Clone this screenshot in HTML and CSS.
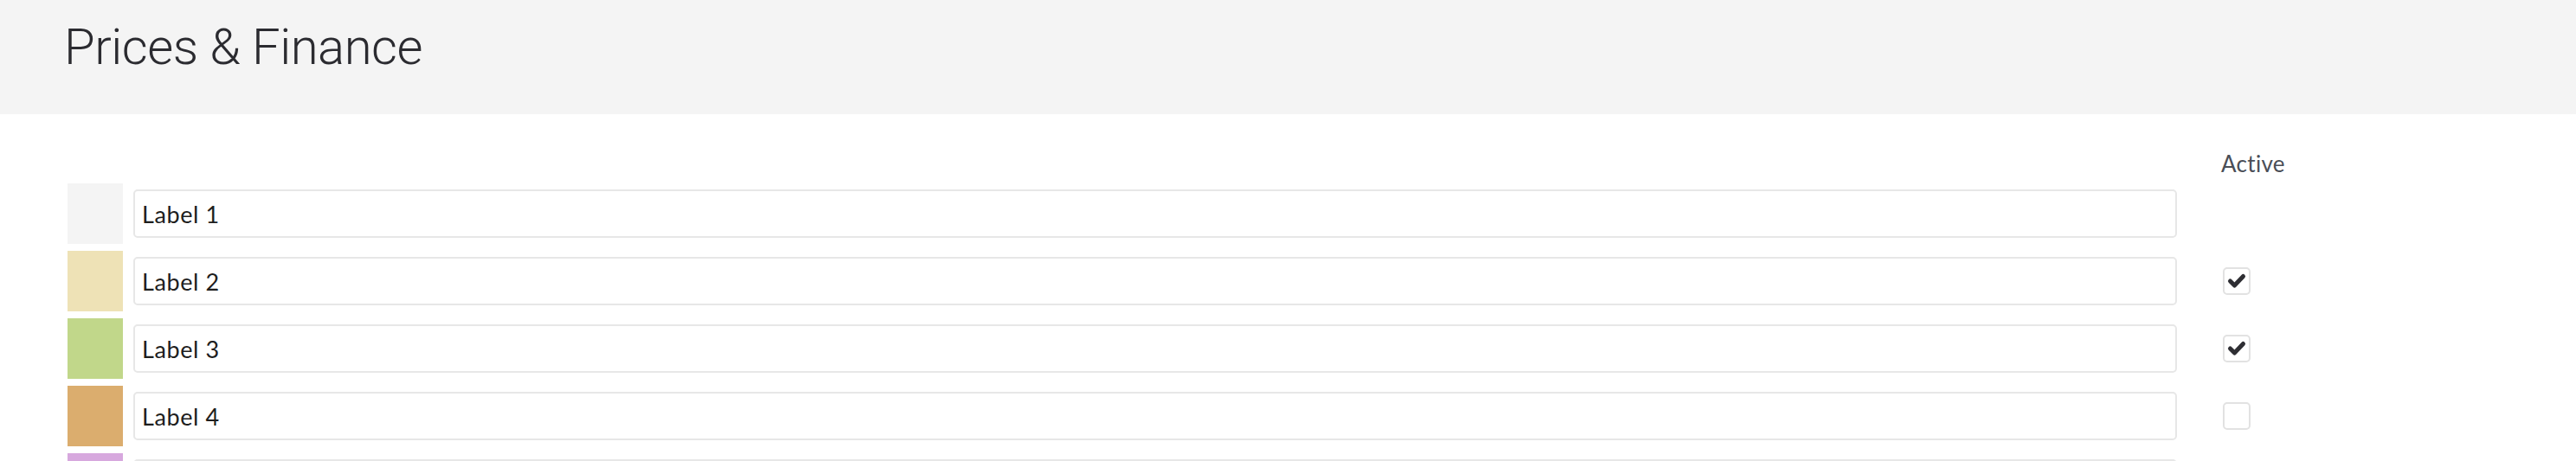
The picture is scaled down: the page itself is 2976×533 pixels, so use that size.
FILE: index.html
```html
<!DOCTYPE html>
<html lang="en">
<head>
<meta charset="utf-8">
<title>Prices &amp; Finance</title>
<link rel="stylesheet" href="styles.css">
</head>
<body>
<header class="page-header">
  <h1 class="page-title">Prices &amp; Finance</h1>
</header>
<main class="labels">
  <div class="labels-head">
    <div class="head-spacer"></div>
    <div class="head-active">Active</div>
  </div>
  <div class="label-row">
    <div class="swatch swatch-1"></div>
    <input class="label-input" type="text" value="Label 1">
    <div class="active-cell"></div>
  </div>
  <div class="label-row">
    <div class="swatch swatch-2"></div>
    <input class="label-input" type="text" value="Label 2">
    <div class="active-cell"><span class="check is-checked"><svg viewBox="0 0 32 32" width="32" height="32"><path d="M8.5 16 L13.5 21 L23.5 10.5" fill="none" stroke="#2e2e33" stroke-width="5" stroke-linecap="round" stroke-linejoin="round"/></svg></span></div>
  </div>
  <div class="label-row">
    <div class="swatch swatch-3"></div>
    <input class="label-input" type="text" value="Label 3">
    <div class="active-cell"><span class="check is-checked"><svg viewBox="0 0 32 32" width="32" height="32"><path d="M8.5 16 L13.5 21 L23.5 10.5" fill="none" stroke="#2e2e33" stroke-width="5" stroke-linecap="round" stroke-linejoin="round"/></svg></span></div>
  </div>
  <div class="label-row">
    <div class="swatch swatch-4"></div>
    <input class="label-input" type="text" value="Label 4">
    <div class="active-cell"><span class="check"></span></div>
  </div>
  <div class="label-row">
    <div class="swatch swatch-5"></div>
    <input class="label-input" type="text" value="Label 5">
    <div class="active-cell"><span class="check"></span></div>
  </div>
</main>
</body>
</html>
```
FILE: styles.css
```css
html, body {
  margin: 0;
  padding: 0;
  background: #ffffff;
  overflow: hidden;
}

body {
  font-family: Lato, "Open Sans", sans-serif;
  color: #222;
}

.page-header {
  height: 132px;
  background: #f4f4f4;
  box-sizing: border-box;
  padding-left: 74px;
  display: flex;
  align-items: center;
}

.page-title {
  margin: 0;
  margin-top: -25px;
  font-family: Roboto, "Liberation Sans", sans-serif;
  font-weight: 300;
  font-size: 58px;
  letter-spacing: -0.5px;
  color: #2b2b30;
}

.labels {
  padding-left: 78px;
  display: flex;
  flex-direction: column;
  gap: 8px;
}

.labels-head {
  display: flex;
  padding-top: 43px;
  height: 29px;
}

.head-spacer {
  flex: 1;
}

.head-active {
  width: 461px;
  box-sizing: border-box;
  padding-left: 51px;
  font-size: 26px;
  line-height: 29px;
  letter-spacing: 0.3px;
  color: #4a4e57;
}

.label-row {
  display: flex;
  align-items: center;
  height: 70px;
}

.swatch {
  width: 64px;
  height: 70px;
  flex: none;
}

.swatch-1 { background: #f4f4f4; }
.swatch-2 { background: #eee2b6; }
.swatch-3 { background: #c1d78a; }
.swatch-4 { background: #dbad6e; }
.swatch-5 { background: #d7a8de; }

.label-input {
  flex: 1;
  min-width: 0;
  margin-left: 12px;
  height: 56px;
  box-sizing: border-box;
  border: 2px solid #e7e7e7;
  border-radius: 5px;
  padding: 0 8px;
  font-family: Lato, "Open Sans", sans-serif;
  font-size: 27px;
  letter-spacing: 0.6px;
  color: #1e1e1e;
  background: #fff;
  outline: none;
}

.active-cell {
  width: 461px;
  flex: none;
  box-sizing: border-box;
  padding-left: 53px;
  display: flex;
  align-items: center;
}

.check {
  width: 32px;
  height: 32px;
  box-sizing: border-box;
  border: 2px solid #e2e2e2;
  border-radius: 5px;
  background: #fff;
  position: relative;
  display: block;
}

.check svg {
  position: absolute;
  left: -2px;
  top: -2px;
}
```
